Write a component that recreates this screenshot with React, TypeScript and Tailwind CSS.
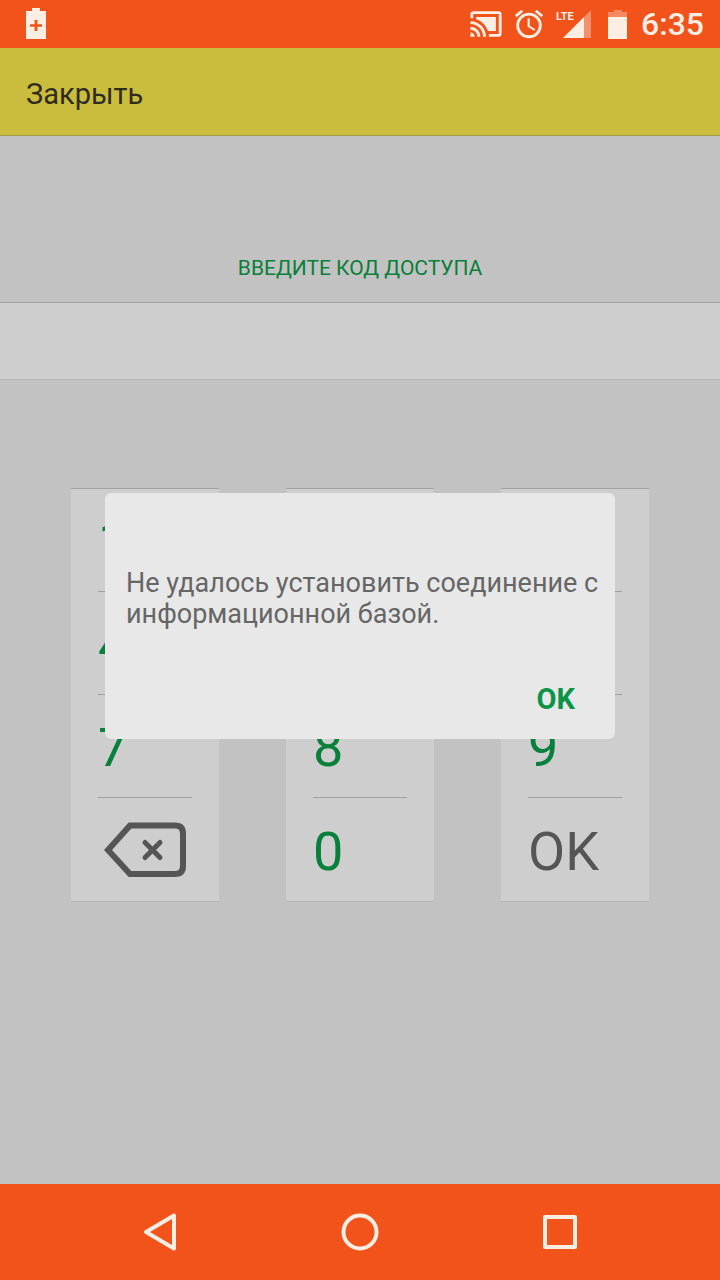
import { useState } from "react";
import clsx from "clsx";

type Key = { id: string; label?: string; muted?: boolean };

const columns: Key[][] = [
  [{ id: "1" }, { id: "4" }, { id: "7" }, { id: "back" }],
  [{ id: "2" }, { id: "5" }, { id: "8" }, { id: "0" }],
  [{ id: "3" }, { id: "6" }, { id: "9" }, { id: "ok", label: "OK", muted: true }],
];

function StatusBar() {
  return (
    <div className="flex h-12 items-center justify-between bg-[#f1531b] pr-4 pl-[26px] text-[#fdeee4]">
      <svg className="h-8 w-5" viewBox="0 0 20 32" fill="currentColor">
        <path d="M6 0h8v3h6v28H0V3h6z" />
        <path d="M8.600 12h2.800v4.200h4.600v2.600h-4.600V23H8.600v-4.200H4v-2.600h4.600z" fill="#f1531b" />
      </svg>
      <div className="flex items-center">
        <svg className="mr-[9px] h-[34px] w-[34px]" viewBox="0 0 24 24" fill="currentColor">
          <path d="M1 18v3h3c0-1.66-1.34-3-3-3zm0-4v2c2.76 0 5 2.24 5 5h2c0-3.87-3.13-7-7-7zm18-7H5v1.63c3.96 1.28 7.09 4.41 8.37 8.37H19V7zM1 10v2c4.97 0 9 4.03 9 9h2c0-6.08-4.93-11-11-11zm20-7H3c-1.1 0-2 .9-2 2v3h2V5h18v14h-7v2h7c1.1 0 2-.9 2-2V5c0-1.1-.9-2-2-2z" />
        </svg>
        <svg className="mr-[10px] h-[34px] w-[34px]" viewBox="0 0 24 24" fill="currentColor">
          <path d="M22 5.72l-4.6-3.86-1.29 1.53 4.6 3.86L22 5.72zM7.88 3.39L6.6 1.86 2 5.71l1.29 1.53 4.59-3.85zM12.5 8H11v6l4.75 2.85.75-1.23-4-2.37V8zM12 4a9 9 0 1 0 0 18 9 9 0 0 0 0-18zm0 16a7 7 0 1 1 0-14 7 7 0 0 1 0 14z" />
        </svg>
        <div className="relative mr-4 h-8 w-9">
          <svg className="h-8 w-9" viewBox="0 0 36 32" fill="currentColor">
            <path d="M35 2v28H7z" opacity=".4" />
            <path d="M28 9v21H7z" />
          </svg>
          <span className="absolute top-0 left-0 text-[11px] leading-[18px] font-bold">LTE</span>
        </div>
        <svg className="mr-[13px] h-8 w-5" viewBox="0 0 20 32" fill="currentColor">
          <path d="M6 2h8v2h5v6H0V4h6z" opacity=".35" />
          <path d="M0 9h19v22H0z" />
        </svg>
        <span className="text-[32px] leading-8 font-medium">6:35</span>
      </div>
    </div>
  );
}

function BackspaceIcon() {
  return (
    <svg className="h-14 w-[84px]" viewBox="0 0 84 56" fill="none" stroke="currentColor" strokeWidth="6">
      <path d="M26 3.500H71Q79 3.500 79 11.500V44Q79 52 71 52H26L4 28Z" />
      <path d="M41 20.500L56 35.500M56 20.500L41 35.500" strokeWidth="5" strokeLinecap="round" />
    </svg>
  );
}

function Keypad({ onKey }: { onKey: (id: string) => void }) {
  return (
    <div className="grid grid-cols-3 gap-[67px] px-[71px]">
      {columns.map((keys, c) => (
        <div key={c} className="border-t border-b border-t-[#a2a2a2] border-b-[#b4b4b4] bg-[#cecece] px-[27px]">
          {keys.map((k, i) => (
            <button
              key={k.id}
              aria-label={k.id === "back" ? "Удалить" : undefined}
              onClick={() => onKey(k.id)}
              className={clsx(
                "flex h-[103px] w-full items-center text-[54px] leading-[60px]",
                i < keys.length - 1 && "border-b border-[#a0a0a0]",
                k.id === "back" ? "pl-1.5" : "pt-1",
                k.muted || k.id === "back" ? "text-[#555555]" : "text-[#06803a]",
              )}
            >
              {k.id === "back" ? <BackspaceIcon /> : (k.label ?? k.id)}
            </button>
          ))}
        </div>
      ))}
    </div>
  );
}

function NavBar() {
  return (
    <nav className="grid h-24 grid-cols-3 place-items-center bg-[#f1531b] px-[60px] text-[#fdeee4]">
      <button aria-label="Назад">
        <svg className="h-10 w-10" viewBox="0 0 40 40" fill="none" stroke="currentColor" strokeWidth="4" strokeLinejoin="round">
          <path d="M34 3.500V36.500L6 20Z" />
        </svg>
      </button>
      <button aria-label="Домой">
        <svg className="h-10 w-10" viewBox="0 0 40 40" fill="none" stroke="currentColor" strokeWidth="4">
          <circle cx="20" cy="20" r="16.500" />
        </svg>
      </button>
      <button aria-label="Недавние">
        <svg className="h-10 w-10" viewBox="0 0 40 40" fill="none" stroke="currentColor" strokeWidth="4" strokeLinejoin="round">
          <path d="M5 5H35V35H5Z" />
        </svg>
      </button>
    </nav>
  );
}

export default function App() {
  const [code, setCode] = useState("");
  const [failed, setFailed] = useState(true);

  const press = (id: string) => {
    if (id === "back") setCode(code.slice(0, -1));
    else if (id === "ok") setFailed(true);
    else setCode(code + id);
  };

  return (
    <div className="flex min-h-screen flex-col bg-[#c2c2c2] font-[Roboto,sans-serif]">
      <StatusBar />
      <div className="relative flex flex-1 flex-col">
        <header className="flex h-[88px] items-center border-b border-[#a39a45] bg-[#cabd3e] px-[26px]">
          <button className="pt-1 text-[29px] leading-9 text-[#2f2b1c]">Закрыть</button>
        </header>
        <main className="flex-1">
          <label htmlFor="code" className="block pt-[116px] pb-[18px] text-center text-[21px] leading-8 text-[#06803a]">
            ВВЕДИТЕ КОД ДОСТУПА
          </label>
          <input
            id="code"
            type="password"
            value={code}
            onChange={(e) => setCode(e.target.value)}
            className="mb-[108px] block h-[78px] w-full border-t border-b border-t-[#a2a2a2] border-b-[#b4b4b4] bg-[#cecece] text-center text-[54px] text-[#06803a] outline-none"
          />
          <Keypad onKey={press} />
        </main>
        {failed && (
          <div className="absolute inset-0 flex items-center justify-center">
            <div
              role="alertdialog"
              aria-describedby="message"
              className="w-full max-w-[510px] rounded-md bg-[#e8e8e8] pt-[75px] pb-[22px]"
            >
              <p id="message" className="pr-4 pl-[21px] text-[27px] leading-[31px] text-[#666666]">
                Не удалось установить соединение с информационной базой.
              </p>
              <div className="flex justify-end pt-[51px] pr-10">
                <button onClick={() => setFailed(false)} className="text-[29px] leading-9 font-bold text-[#0b9447]">
                  OK
                </button>
              </div>
            </div>
          </div>
        )}
      </div>
      <NavBar />
    </div>
  );
}
